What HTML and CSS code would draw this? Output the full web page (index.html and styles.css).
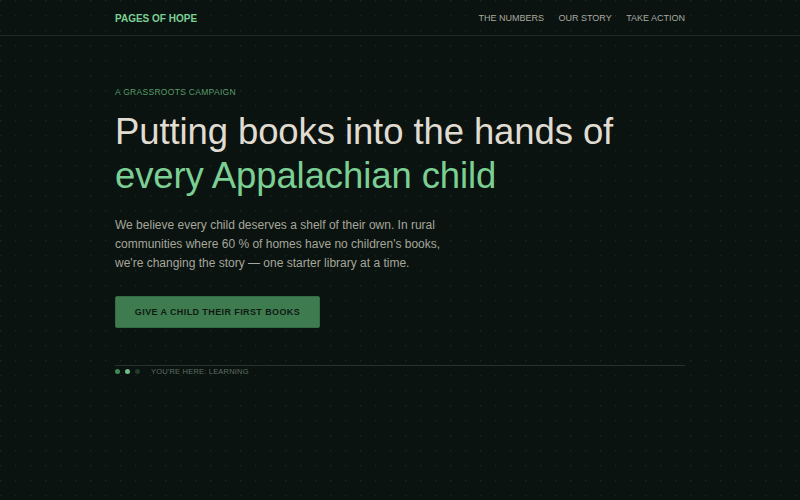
FILE: index.html
```html
<!DOCTYPE html>
<html lang="en">
<head>
<meta charset="utf-8">
<title>Pages of Hope</title>
<link rel="stylesheet" href="styles.css">
</head>
<body>
<header class="site-header">
  <div class="container header-inner">
    <div class="logo">PAGES OF HOPE</div>
    <nav class="nav">
      <a href="#">THE NUMBERS</a>
      <a href="#">OUR STORY</a>
      <a href="#">TAKE ACTION</a>
    </nav>
  </div>
</header>
<main class="container hero">
  <p class="eyebrow">A GRASSROOTS CAMPAIGN</p>
  <h1 class="title">Putting books into the hands of<br><span class="accent">every Appalachian child</span></h1>
  <p class="lead">We believe every child deserves a shelf of their own. In rural communities where 60&nbsp;% of homes have no children's books, we're changing the story — one starter library at a time.</p>
  <a class="cta" href="#">GIVE A CHILD THEIR FIRST BOOKS</a>
  <div class="progress">
    <div class="dots">
      <span class="dot done"></span>
      <span class="dot active"></span>
      <span class="dot"></span>
    </div>
    <span class="progress-label">YOU'RE HERE: LEARNING</span>
  </div>
</main>
</body>
</html>
```
FILE: styles.css
```css
* { box-sizing: border-box; }
html, body { margin: 0; padding: 0; }
body {
  background-color: #0a130f;
  background-image: radial-gradient(circle at 0.5px 0.5px, rgba(70, 140, 90, 0.18) 0.8px, transparent 1.2px);
  background-size: 15px 15px;
  color: #dcd8ce;
  font-family: "Liberation Sans", Arial, sans-serif;
  min-height: 500px;
}
.container {
  width: 570px;
  margin: 0 auto;
}
.site-header {
  border-bottom: 1px solid #1d2b22;
}
.header-inner {
  height: 35px;
  display: flex;
  align-items: center;
  justify-content: space-between;
}
.logo {
  color: #7ccf94;
  font-weight: bold;
  font-size: 10px;
  letter-spacing: 0;
  padding-top: 1px;
}
.nav {
  display: flex;
  gap: 14.5px;
  padding-top: 1px;
}
.nav a {
  color: #a9a9a0;
  text-decoration: none;
  font-size: 9px;
  letter-spacing: 0;
}
.hero {
  padding-top: 51px;
}
.eyebrow {
  margin: 0;
  color: #5a9c6c;
  font-size: 8.5px;
  letter-spacing: 0.3px;
  line-height: 10px;
}
.title {
  margin: 13px 0 0;
  font-weight: normal;
  font-size: 36.5px;
  line-height: 44px;
  letter-spacing: -0.1px;
  color: #e0dcd2;
}
.accent { color: #7ccf94; }
.lead {
  margin: 18px 0 0;
  width: 340px;
  font-size: 12px;
  line-height: 19px;
  color: #a6a69c;
}
.cta {
  display: inline-flex;
  align-items: center;
  justify-content: center;
  margin-top: 23px;
  width: 205px;
  height: 32px;
  background: #3e7c50;
  border: 1px solid #346c45;
  border-radius: 2px;
  color: #0e1a12;
  font-weight: bold;
  font-size: 9px;
  letter-spacing: 0.4px;
  text-decoration: none;
}
.progress {
  margin-top: 37px;
  border-top: 1px solid #25332a;
  display: flex;
  align-items: center;
  gap: 11px;
  padding-top: 1px;
}
.dots {
  display: flex;
  gap: 5px;
}
.dot {
  width: 5px;
  height: 5px;
  border-radius: 50%;
  background: #253a2c;
}
.dot.done { background: #3f8a55; }
.dot.active { background: #6cbf88; }
.progress-label {
  color: #5f6c62;
  font-size: 7.5px;
  letter-spacing: 0.2px;
}
```
